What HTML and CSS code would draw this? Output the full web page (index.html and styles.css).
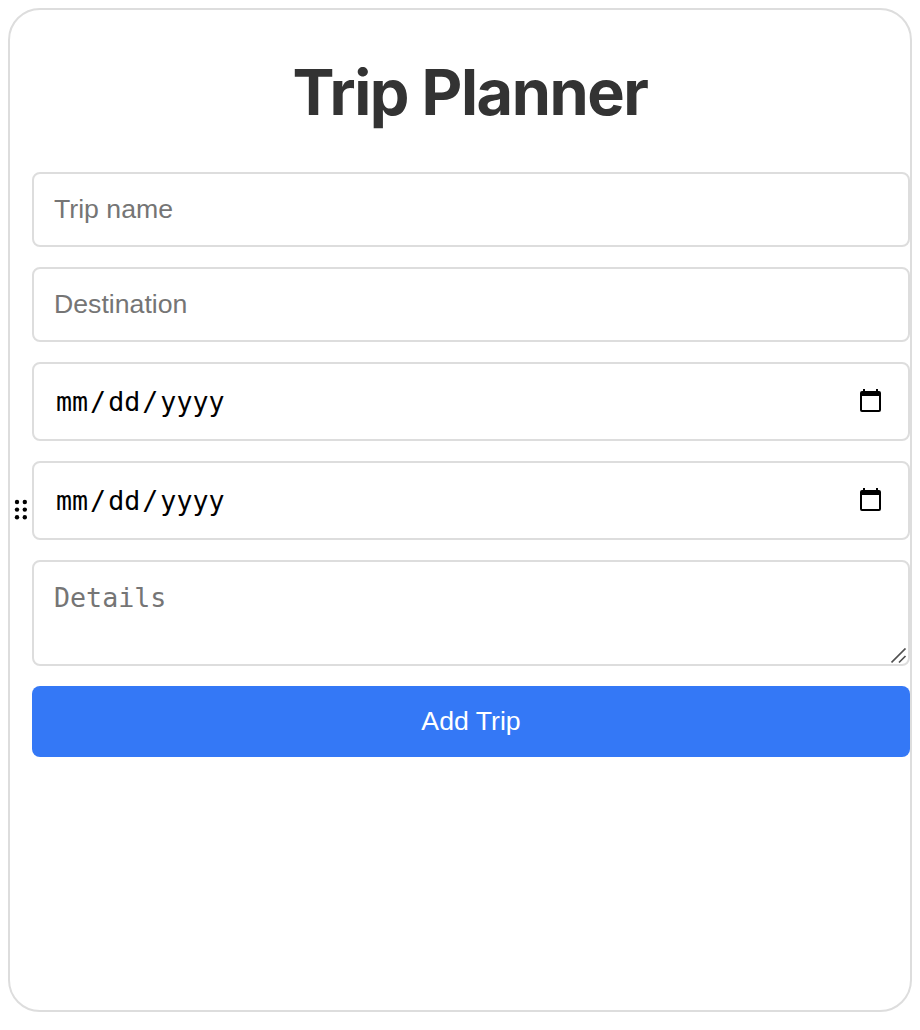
FILE: index.html
```html
<!DOCTYPE html>
<html lang="en">
<head>
<meta charset="utf-8">
<title>Trip Planner</title>
<link rel="stylesheet" href="styles.css">
</head>
<body>
<main class="card">
  <div class="handle">
    <svg width="14" height="22" viewBox="0 0 14 22"><g fill="#000"><circle cx="3" cy="3" r="2.2"/><circle cx="10.8" cy="3" r="2.2"/><circle cx="3" cy="10.6" r="2.2"/><circle cx="10.8" cy="10.6" r="2.2"/><circle cx="3" cy="18.2" r="2.2"/><circle cx="10.8" cy="18.2" r="2.2"/></g></svg>
  </div>
  <form class="form">
    <h1 class="title">Trip Planner</h1>
    <input class="field" type="text" placeholder="Trip name">
    <input class="field" type="text" placeholder="Destination">
    <div class="field date"><span class="date-text">mm<i class="slash">/</i>dd<i class="slash">/</i>yyyy</span>
      <svg class="calendar" width="21" height="23" viewBox="0 0 21 23"><path fill="#000" fill-rule="evenodd" d="M3 0h2v2h11V0h2v2h1a2 2 0 0 1 2 2v17a2 2 0 0 1-2 2H2a2 2 0 0 1-2-2V4a2 2 0 0 1 2-2h1zM2 7v14h17V7z"/></svg>
    </div>
    <div class="field date"><span class="date-text">mm<i class="slash">/</i>dd<i class="slash">/</i>yyyy</span>
      <svg class="calendar" width="21" height="23" viewBox="0 0 21 23"><path fill="#000" fill-rule="evenodd" d="M3 0h2v2h11V0h2v2h1a2 2 0 0 1 2 2v17a2 2 0 0 1-2 2H2a2 2 0 0 1-2-2V4a2 2 0 0 1 2-2h1zM2 7v14h17V7z"/></svg>
    </div>
    <div class="details-wrap">
      <textarea class="field details" placeholder="Details"></textarea>
      <svg class="grip" width="16" height="16" viewBox="0 0 16 16"><path d="M.5 14.5 14.5 .5M8 14.5l6.5-6.5" stroke="#505050" stroke-width="1.7" fill="none"/></svg>
    </div>
    <button class="submit" type="button">Add Trip</button>
  </form>
</main>
</body>
</html>
```
FILE: styles.css
```css
* { box-sizing: border-box; }
body { margin: 0; padding: 8px; background: #fff; }
.card {
  width: 904px;
  height: 1004px;
  border: 2px solid #ddd;
  border-radius: 32px;
  display: flex;
  align-items: center;
}
.handle { flex: none; width: 22px; padding: 0 0 1px 4px; display: flex; }
.form {
  flex: none;
  align-self: flex-start;
  width: 878px;
  display: flex;
  flex-direction: column;
  gap: 20px;
}
.title {
  margin: 43px 0 20px;
  height: 79px;
  padding-right: 2px;
  font: 700 63px/79px Inter, sans-serif;
  letter-spacing: -1.45px;
  color: #333;
  text-align: center;
}
.field {
  display: block;
  width: 100%;
  height: 75px;
  padding: 0 20px;
  border: 2px solid #ddd;
  border-radius: 8px;
  background: #fff;
  font: 26.67px "Liberation Sans", Arial, sans-serif;
}
.field::placeholder { color: #757575; opacity: 1; }
.date {
  height: 79px;
  padding: 0 27px 0 22px;
  display: flex;
  align-items: center;
  justify-content: space-between;
  font-family: "DejaVu Sans Mono", monospace;
  color: #000;
}
.slash { font-style: normal; padding: 0 2px; }
.calendar { margin-bottom: 2px; }
.details-wrap { position: relative; height: 106px; }
.details {
  height: 106px;
  padding: 20px;
  resize: none;
  font-family: "DejaVu Sans Mono", monospace;
}
.grip { position: absolute; right: 3px; bottom: 2px; }
.submit {
  height: 71px;
  border: 0;
  border-radius: 8px;
  background: #3478f6;
  color: #fff;
  font: 26.67px "Liberation Sans", Arial, sans-serif;
}
```
